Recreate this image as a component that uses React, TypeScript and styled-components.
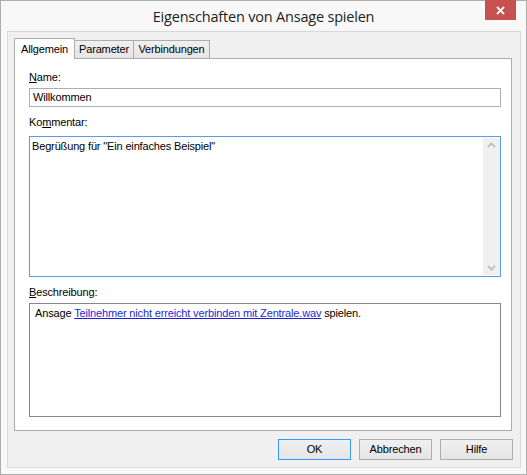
import styled, { createGlobalStyle } from "styled-components";

const GlobalStyle = createGlobalStyle`
    html, body {
        margin: 0;
        padding: 0;
        background: #ffffff;
    }
    * {
        box-sizing: border-box;
    }
`

const StyledWindow = styled.div`
    width: 527px;
    height: 475px;
    display: flex;
    flex-direction: column;
    background-color: #f8f8f8;
    border: 1px solid #adadad;
    font-family: "Liberation Sans", Arial, sans-serif;
    font-size: 11px;
    line-height: 13px;
    letter-spacing: -0.15px;
    color: #000000;
`
const StyledTitleBar = styled.div`
    height: 30px;
    display: grid;
    grid-template-columns: 1fr auto 1fr;
    align-items: start;
`
const StyledTitle = styled.div`
    grid-column: 2;
    padding-top: 6px;
    font-family: "Open Sans", "Noto Sans", sans-serif;
    font-size: 14.5px;
    line-height: 20px;
    color: #1e1e1e;
    letter-spacing: -0.2px;
`
const StyledCloseButton = styled.div`
    grid-column: 3;
    justify-self: end;
    width: 31px;
    height: 20px;
    margin-right: 10px;
    margin-top: -1px;
    background-color: #c75050;
    color: #ffffff;
    display: flex;
    align-items: center;
    justify-content: center;
`
const StyledClient = styled.div`
    flex: 1;
    margin: 0 5px 6px 6px;
    display: flex;
    flex-direction: column;
    padding: 6px 7px 7px 6px;
    background-color: #f0f0f0;
    border: 1px solid #d9d9d9;
`
const StyledTabStrip = styled.div`
    height: 20px;
    display: flex;
    align-items: flex-end;
`
const StyledTab = styled.div<{ $active?: boolean; $width: number }>`
    position: relative;
    width: ${p => p.$width}px;
    height: ${p => (p.$active ? 21 : 18)}px;
    margin-bottom: ${p => (p.$active ? -1 : 0)}px;
    margin-left: ${p => (p.$active ? 0 : -1)}px;
    padding-top: ${p => (p.$active ? 4 : 2)}px;
    text-align: center;
    border: 1px solid #acacac;
    border-bottom: none;
    background: ${p => (p.$active ? "#ffffff" : "linear-gradient(#f0f0f0, #e5e5e5)")};
    z-index: ${p => (p.$active ? 2 : 0)};
`
const StyledPanel = styled.div`
    flex: 1;
    margin-right: 1px;
    display: flex;
    flex-direction: column;
    padding: 12px 10px 13px 14px;
    background-color: #ffffff;
    border: 1px solid #acacac;
`
const StyledLabel = styled.div<{ $gap: number }>`
    margin-top: ${p => p.$gap}px;
`
const StyledTextBox = styled.div`
    height: 19px;
    margin-top: 4px;
    padding: 2px 3px 0 3px;
    border: 1px solid #abadb3;
`
const StyledMemo = styled.div`
    height: 141px;
    margin-top: 7px;
    display: flex;
    border: 1px solid #569de5;
`
const StyledMemoText = styled.div`
    flex: 1;
    padding: 3px 2px;
`
const StyledScrollBar = styled.div`
    width: 17px;
    margin: 1px 0;
    display: flex;
    flex-direction: column;
    justify-content: space-between;
    align-items: center;
    padding: 4px 0;
    background-color: #f0f0f0;
`
const StyledDescription = styled.div`
    flex: 1;
    margin-top: 4px;
    padding: 3px 5px;
    border: 1px solid #828790;
`
const StyledLink = styled.span`
    color: #1f1fd9;
    text-decoration: underline;
`
const StyledButtonRow = styled.div`
    display: flex;
    justify-content: flex-end;
    gap: 8px;
    margin-top: 8px;
`
const StyledButton = styled.div<{ $default?: boolean }>`
    width: 73px;
    height: 21px;
    display: flex;
    align-items: center;
    justify-content: center;
    border: 1px solid ${p => (p.$default ? "#3399ff" : "#adadad")};
    background: linear-gradient(#f0f0f0, #e5e5e5);
`

function Chevron({ down }: { down?: boolean }) {
    return (
        <svg width="9" height="6" viewBox="0 0 9 6">
            <path
                d={down ? "M1 1 L4.5 4.5 L8 1" : "M1 5 L4.5 1.5 L8 5"}
                fill="none"
                stroke="#c2c2c2"
                strokeWidth="2"
            />
        </svg>
    );
}

export default function App() {
    return (
        <>
            <GlobalStyle />
            <StyledWindow>
                <StyledTitleBar>
                    <StyledTitle>Eigenschaften von Ansage spielen</StyledTitle>
                    <StyledCloseButton>
                        <svg width="9" height="9" viewBox="0 0 9 9">
                            <path d="M1 1 L8 8 M8 1 L1 8" stroke="#ffffff" strokeWidth="1.8" />
                        </svg>
                    </StyledCloseButton>
                </StyledTitleBar>
                <StyledClient>
                    <StyledTabStrip>
                        <StyledTab $active $width={61}>Allgemein</StyledTab>
                        <StyledTab $width={60}>Parameter</StyledTab>
                        <StyledTab $width={77}>Verbindungen</StyledTab>
                    </StyledTabStrip>
                    <StyledPanel>
                        <StyledLabel $gap={0}><u>N</u>ame:</StyledLabel>
                        <StyledTextBox>Willkommen</StyledTextBox>
                        <StyledLabel $gap={9}>Ko<u>m</u>mentar:</StyledLabel>
                        <StyledMemo>
                            <StyledMemoText>Begrüßung für "Ein einfaches Beispiel"</StyledMemoText>
                            <StyledScrollBar>
                                <Chevron />
                                <Chevron down />
                            </StyledScrollBar>
                        </StyledMemo>
                        <StyledLabel $gap={9}><u>B</u>eschreibung:</StyledLabel>
                        <StyledDescription>
                            Ansage <StyledLink>Teilnehmer nicht erreicht verbinden mit Zentrale.wav</StyledLink> spielen.
                        </StyledDescription>
                    </StyledPanel>
                    <StyledButtonRow>
                        <StyledButton $default>OK</StyledButton>
                        <StyledButton>Abbrechen</StyledButton>
                        <StyledButton>Hilfe</StyledButton>
                    </StyledButtonRow>
                </StyledClient>
            </StyledWindow>
        </>
    );
}
